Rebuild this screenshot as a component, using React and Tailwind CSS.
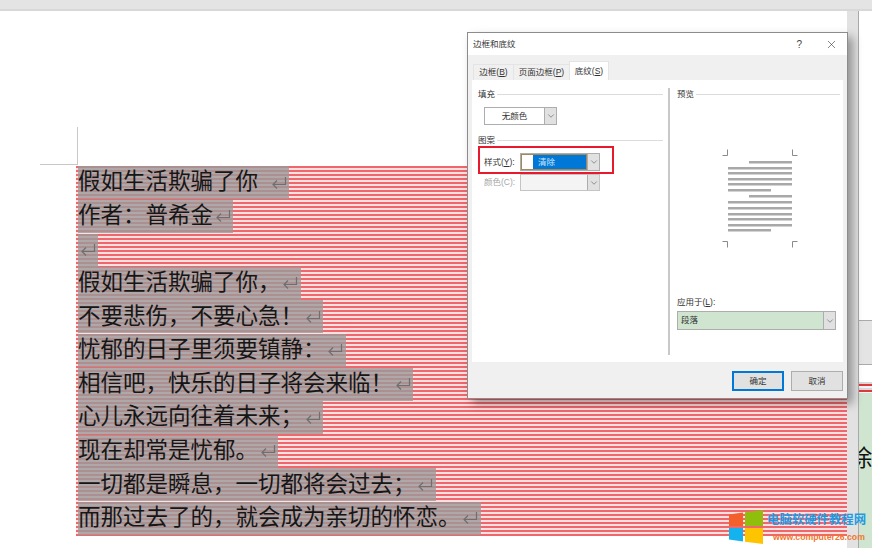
import { ChevronDown, X } from "lucide-react";

const poem = [
  { text: "假如生活欺骗了你", extra: "ml-[11px]" },
  { text: "作者：普希金" },
  { text: "" },
  { text: "假如生活欺骗了你，" },
  { text: "不要悲伤，不要心急！" },
  { text: "忧郁的日子里须要镇静：" },
  { text: "相信吧，快乐的日子将会来临！" },
  { text: "心儿永远向往着未来；" },
  { text: "现在却常是忧郁。" },
  { text: "一切都是瞬息，一切都将会过去；" },
  { text: "而那过去了的，就会成为亲切的怀恋。" },
];

const ReturnMark = ({ extra = "" }) => (
  <span className={`w-[20px] h-[33px] flex items-center justify-center ${extra}`}>
    <svg width="17" height="14" viewBox="0 0 17 14" fill="none" stroke="#6f6f6f" strokeWidth="1.2">
      <path d="M14.5 1v7.5H2M6 4.5L2 8.5l4 4" />
    </svg>
  </span>
);

const Combo = ({ width, height = "h-[18px]", children, disabled }) => (
  <div className={`flex ${width} ${height} border border-[#adadad] ${disabled ? "bg-[#f4f4f4] border-[#c4c4c4]" : "bg-white"}`}>
    <div className="flex-1 min-w-0 flex items-center">{children}</div>
    <div className="w-[12px] bg-[#e1e1e1] border-l border-[#adadad] flex items-center justify-center">
      <ChevronDown size={10} strokeWidth={1.4} color="#555" />
    </div>
  </div>
);

const GroupHead = ({ label, lineClass = "" }) => (
  <div className="flex items-center gap-[2px] h-[12px]">
    <span className="text-[8.5px] text-[#333] leading-none">{label}</span>
    <div className={`flex-1 h-px bg-[#dcdcdc] ${lineClass}`} />
  </div>
);

const Preview = () => {
  const rows = [
    [28, 159], [7, 165], [7, 170], [7, 176], [7, 181], [7, 187, 43], [28, 193],
    [7, 199], [7, 205], [7, 211], [7, 216], [7, 222], [7, 227, 43],
  ];
  return (
    <svg width="80" height="100" viewBox="0 0 80 100" className="block ml-[44px] mt-[48px]" fill="none" stroke="#8a8a8a">
      <path d="M1.5 7.5h5v-6M71.5 1.5v6h5M1.5 93.5h5v6M71.5 99.5v-6h5" />
      {rows.map((r, i) => (
        <rect key={i} x={r[0]} y={r[1] - 146} width={r[2] || 71 - r[0]} height="2.5" fill="#a8a8a8" stroke="none" />
      ))}
    </svg>
  );
};

const Dialog = () => (
  <div className="absolute left-[467px] top-[32px] w-[381px] h-[367px] bg-[#f0f0f0] border border-[#8c8c8c] shadow-[5px_5px_9px_rgba(0,0,0,0.35)]">
    <div className="h-[22px] bg-white flex items-center pl-[5px] pr-[9px] text-[8.5px] text-[#333]">
      <span className="flex-1">边框和底纹</span>
      <span className="mr-[23px] text-[10px] text-[#444]">?</span>
      <X size={13} strokeWidth={1.1} color="#333" />
    </div>
    <div className="h-[25px] flex items-end pl-[5px] text-[8.5px] text-[#333]">
      <div className="w-[40px] h-[16px] flex items-center justify-center bg-[#f0f0f0] border-t border-l border-[#e4e4e4]">边框(<u>B</u>)</div>
      <div className="w-[56px] h-[16px] flex items-center justify-center bg-[#f0f0f0] border-t border-l border-[#e4e4e4]">页面边框(<u>P</u>)</div>
      <div className="w-[40px] h-[19px] flex items-center justify-center bg-white border-t border-x border-[#e4e4e4]">底纹(<u>S</u>)</div>
    </div>
    <div className="mx-[4px] h-[282px] bg-white flex">
      <div className="w-[198px] h-[267px] mt-[8px] pl-[6px] pr-[5px] border-r-2 border-[#c8c8c8]">
        <GroupHead label="填充" />
        <div className="mt-[7px] ml-[6px]">
          <Combo width="w-[73px]">
            <span className="flex-1 text-center text-[8.5px] text-[#333]">无颜色</span>
          </Combo>
        </div>
        <div className="mt-[9px]"><GroupHead label="图案" /></div>
        <div className="w-[136px] h-[28px] border-2 border-[#e8192c] pl-[4px] pt-[5px] flex text-[8.5px] text-[#333]">
          <span className="w-[36px] h-[18px] flex items-center">样式(<u>Y</u>):</span>
          <Combo width="w-[80px]">
            <div className="flex-1 h-full flex items-center bg-[#0078d7] border border-[#a08a5c] text-[#cfe6fa]">
              <span className="w-[11px] h-full bg-white" />
              <span className="ml-[5px]">清除</span>
            </div>
          </Combo>
        </div>
        <div className="flex pl-[6px] text-[8.5px] text-[#a6a6a6]">
          <span className="w-[36px] h-[17px] flex items-center">颜色(C):</span>
          <Combo width="w-[80px]" height="h-[17px]" disabled />
        </div>
      </div>
      <div className="flex-1 pl-[7px] pr-[3px] mt-[8px]">
        <GroupHead label="预览" />
        <Preview />
        <div className="mt-[48px] text-[8.5px] text-[#333] leading-[12px]">应用于(<u>L</u>):</div>
        <div className="mt-[3px]">
          <Combo width="w-[159px]" height="h-[19px]">
            <span className="w-full h-full bg-[#cfe5d0] flex items-center pl-[3px] text-[8.5px] text-[#333]">段落</span>
          </Combo>
        </div>
      </div>
    </div>
    <div className="flex justify-end gap-[7px] pr-[4px] pt-[9px] text-[8.5px] text-[#333]">
      <button className="w-[52px] h-[20px] bg-[#e1e1e1] border-2 border-[#0078d7]">确定</button>
      <button className="w-[52px] h-[20px] bg-[#e1e1e1] border border-[#adadad]">取消</button>
    </div>
  </div>
);

const Watermark = () => (
  <div className="absolute left-[729px] top-[510px] flex gap-[4px]">
    <svg width="34" height="34" viewBox="0 0 34 34" className="shrink-0">
      <path d="M0 4.5l14-2V16H0z" fill="#f4602c" />
      <path d="M16 2.2L34 0v16H16z" fill="#8fbe0c" />
      <path d="M0 18h14v13.5l-14-2z" fill="#14b3ee" />
      <path d="M16 18h18v16l-18-2.3z" fill="#fec400" />
    </svg>
    <div className="pt-[3px]">
      <div className="text-[12.4px] leading-[14px] font-bold text-[#1f9be3] whitespace-nowrap">电脑软硬件教程网</div>
      <div className="ml-[6px] mt-[4px] text-[8.7px] leading-[12px] font-bold text-[#f0772f] whitespace-nowrap [font-family:'Liberation_Sans',sans-serif]">www.computer26.com</div>
    </div>
  </div>
);

export default function App() {
  return (
    <div className="relative w-[872px] h-[548px] overflow-hidden bg-white flex flex-col [font-family:'Liberation_Sans','Noto_Sans_CJK_SC',sans-serif]">
      <div className="h-[9px] bg-[#e4e4e4] border-b-2 border-[#d8d8d8] box-content" />
      <div className="flex-1 flex min-h-0">
        {/* document page */}
        <div className="w-[847px] bg-white">
          <div className="ml-[40px] mt-[116px] w-[38px] h-[38px] border-r border-b border-[#c8c8c8]" />
          <div className="ml-[76px] mt-px bg-[repeating-linear-gradient(180deg,#f0666d_0px,#f0666d_2px,#fde0e0_2px,#fde0e0_4px)]">
            {poem.map((line, i) => (
              <div key={i} className="h-[33.6px] pl-[2px]">
                <div className="inline-flex h-[33px] items-center bg-[#9a9a9a]/80 text-[22.5px] text-[#161616] leading-none whitespace-pre">
                  <span>{line.text}</span>
                  <ReturnMark extra={line.extra} />
                </div>
              </div>
            ))}
          </div>
        </div>
        {/* scroll track */}
        <div className="w-[12px] bg-[#e2e2e2] border-r border-[#a8a8a8]" />
        {/* next panel on the right */}
        <div className="flex-1 min-w-0 overflow-hidden flex flex-col bg-white">
          <div className="mt-[309px] h-[45px] bg-[#e4e4e4] border-y border-[#aaaaaa]" />
          <div className="mt-[17px] h-[11px] bg-[repeating-linear-gradient(180deg,#d8d8d8_0px,#d8d8d8_2px,#dd3a3f_2px,#dd3a3f_4px,#f4f4f4_4px,#f4f4f4_6px)]" />
          <div className="flex-1 bg-[#cfe5d0] pt-[53px] pl-0">
            <div className="-ml-[9px] text-[22.5px] leading-[26px] text-[#111]">涂</div>
          </div>
        </div>
      </div>
      <Dialog />
      <Watermark />
    </div>
  );
}
